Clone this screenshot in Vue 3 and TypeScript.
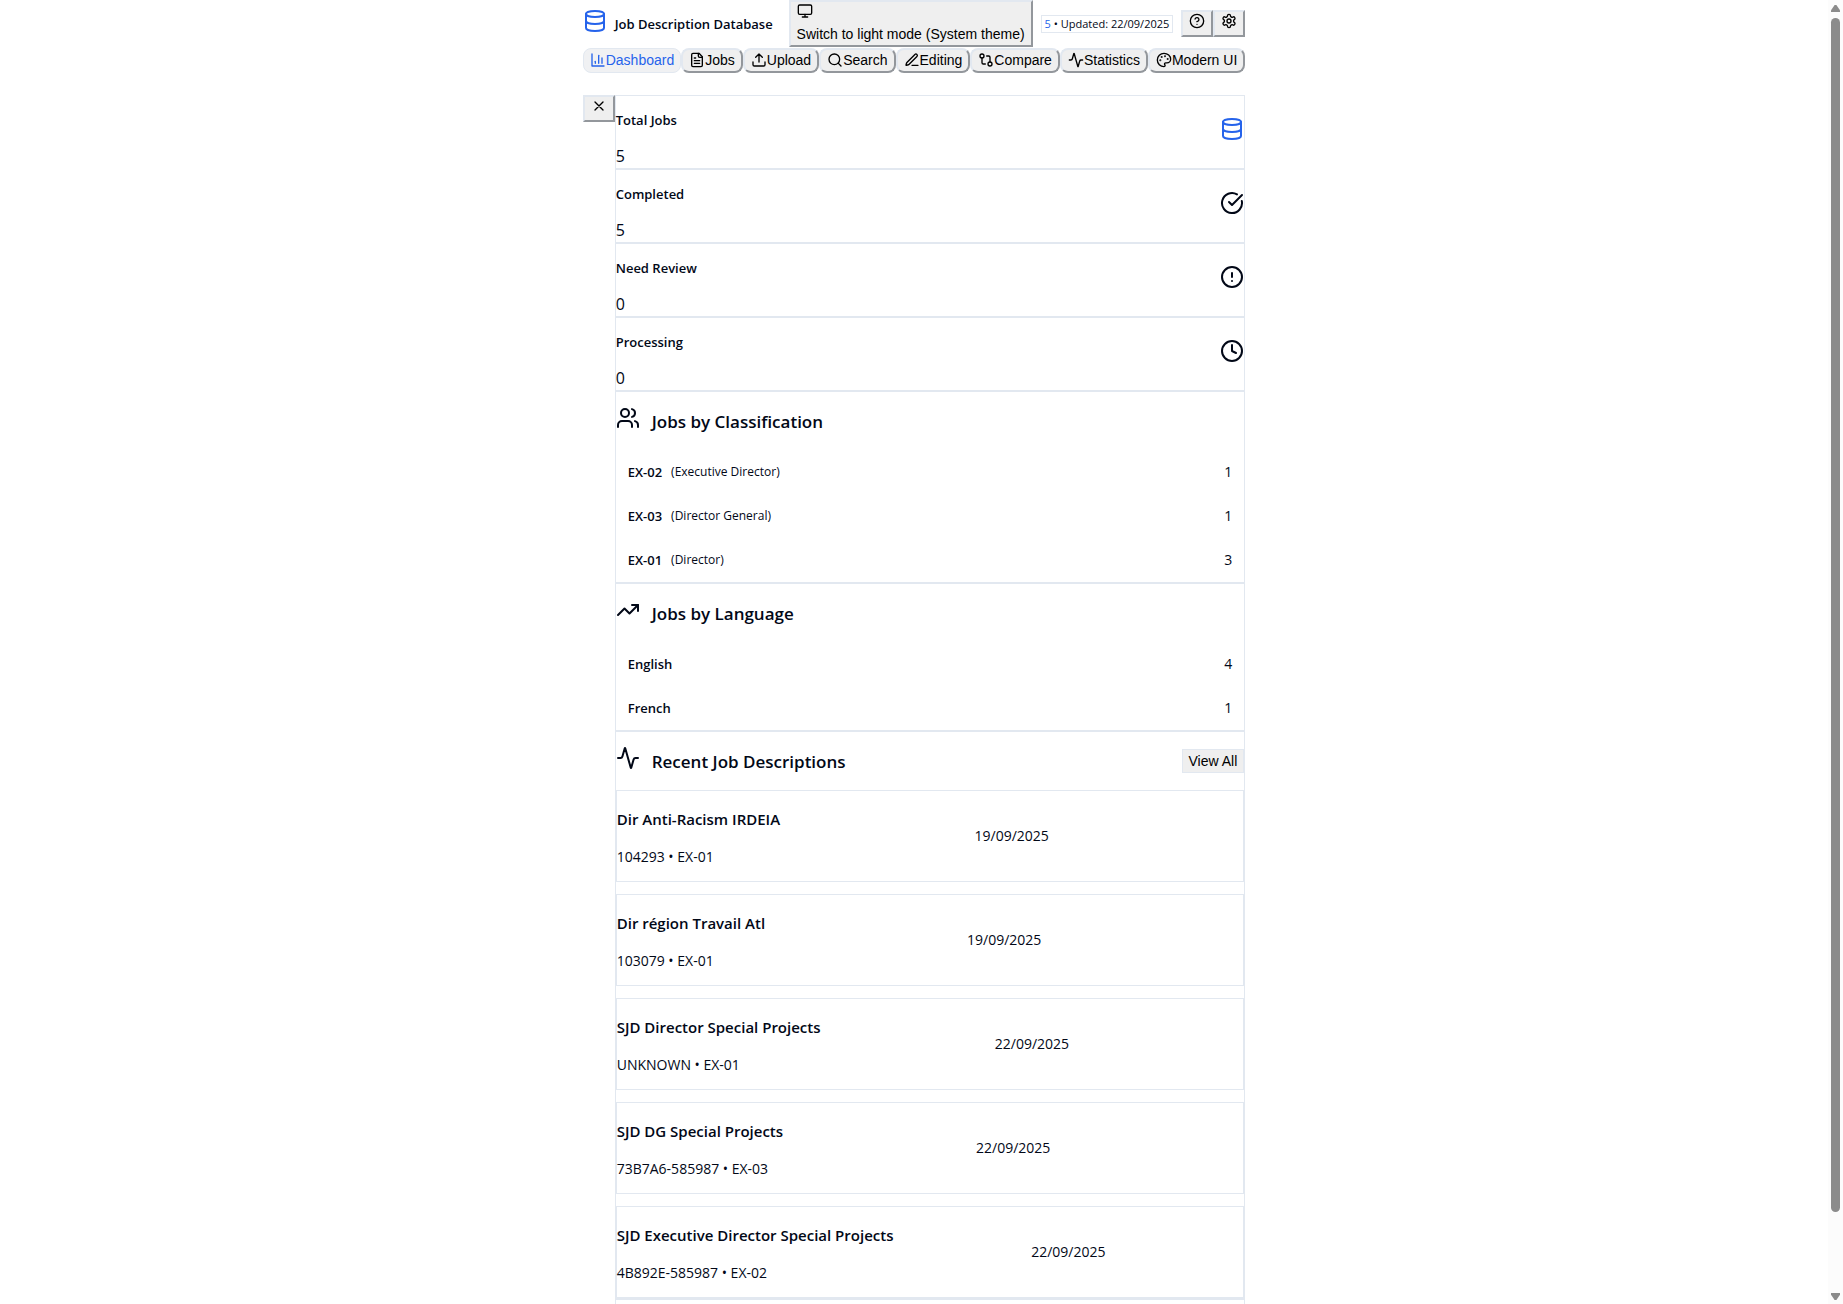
<script setup lang="ts">
import { h, type FunctionalComponent } from 'vue'

const paths: Record<string, string> = {
  database:
    '<ellipse cx="12" cy="5" rx="9" ry="3"/><path d="M3 5V19A9 3 0 0 0 21 19V5"/><path d="M3 12A9 3 0 0 0 21 12"/>',
  monitor: '<rect width="20" height="14" x="2" y="3" rx="2"/><path d="M8 21h8M12 17v4"/>',
  help: '<circle cx="12" cy="12" r="10"/><path d="M9.09 9a3 3 0 0 1 5.83 1c0 2-3 3-3 3"/><path d="M12 17h.01"/>',
  settings:
    '<path d="M12.22 2h-.44a2 2 0 0 0-2 2v.18a2 2 0 0 1-1 1.73l-.43.25a2 2 0 0 1-2 0l-.15-.08a2 2 0 0 0-2.73.73l-.22.38a2 2 0 0 0 .73 2.73l.15.1a2 2 0 0 1 1 1.72v.51a2 2 0 0 1-1 1.74l-.15.09a2 2 0 0 0-.73 2.73l.22.38a2 2 0 0 0 2.73.73l.15-.08a2 2 0 0 1 2 0l.43.25a2 2 0 0 1 1 1.73V20a2 2 0 0 0 2 2h.44a2 2 0 0 0 2-2v-.18a2 2 0 0 1 1-1.73l.43-.25a2 2 0 0 1 2 0l.15.08a2 2 0 0 0 2.73-.73l.22-.39a2 2 0 0 0-.73-2.73l-.15-.08a2 2 0 0 1-1-1.74v-.5a2 2 0 0 1 1-1.74l.15-.09a2 2 0 0 0 .73-2.73l-.22-.38a2 2 0 0 0-2.73-.73l-.15.08a2 2 0 0 1-2 0l-.43-.25a2 2 0 0 1-1-1.73V4a2 2 0 0 0-2-2z"/><circle cx="12" cy="12" r="3"/>',
  chart: '<path d="M3 3v18h18"/><path d="M18 17V9"/><path d="M13 17V5"/><path d="M8 17v-3"/>',
  file: '<path d="M15 2H6a2 2 0 0 0-2 2v16a2 2 0 0 0 2 2h12a2 2 0 0 0 2-2V7Z"/><path d="M14 2v4a2 2 0 0 0 2 2h4"/><path d="M10 9H8M16 13H8M16 17H8"/>',
  upload: '<path d="M21 15v4a2 2 0 0 1-2 2H5a2 2 0 0 1-2-2v-4"/><path d="m17 8-5-5-5 5M12 3v12"/>',
  search: '<circle cx="11" cy="11" r="8"/><path d="m21 21-4.3-4.3"/>',
  pen: '<path d="M12 20h9"/><path d="M16.376 3.622a1 1 0 0 1 3.002 3.002L7.368 18.635a2 2 0 0 1-.855.506l-2.872.838a.5.5 0 0 1-.62-.62l.838-2.872a2 2 0 0 1 .506-.854z"/>',
  compare:
    '<circle cx="18" cy="18" r="3"/><circle cx="6" cy="6" r="3"/><path d="M13 6h3a2 2 0 0 1 2 2v7"/><path d="M11 18H8a2 2 0 0 1-2-2V9"/>',
  activity:
    '<path d="M22 12h-2.48a2 2 0 0 0-1.93 1.46l-2.35 8.36a.25.25 0 0 1-.48 0L9.24 2.18a.25.25 0 0 0-.48 0l-2.35 8.36A2 2 0 0 1 4.49 12H2"/>',
  palette:
    '<circle cx="13.5" cy="6.5" r=".5" fill="currentColor"/><circle cx="17.5" cy="10.5" r=".5" fill="currentColor"/><circle cx="8.5" cy="7.5" r=".5" fill="currentColor"/><circle cx="6.5" cy="12.5" r=".5" fill="currentColor"/><path d="M12 2C6.5 2 2 6.5 2 12s4.5 10 10 10c.926 0 1.648-.746 1.648-1.688 0-.437-.18-.835-.437-1.125-.29-.289-.438-.652-.438-1.125a1.64 1.64 0 0 1 1.668-1.668h1.996c3.051 0 5.555-2.503 5.555-5.554C21.965 6.012 17.461 2 12 2z"/>',
  close: '<path d="M18 6 6 18M6 6l12 12"/>',
  check: '<path d="M21.801 10A10 10 0 1 1 17 3.335"/><path d="m9 11 3 3L22 4"/>',
  alert: '<circle cx="12" cy="12" r="10"/><path d="M12 8v4M12 16h.01"/>',
  clock: '<circle cx="12" cy="12" r="10"/><path d="M12 6v6l4 2"/>',
  users:
    '<path d="M16 21v-2a4 4 0 0 0-4-4H6a4 4 0 0 0-4 4v2"/><circle cx="9" cy="7" r="4"/><path d="M22 21v-2a4 4 0 0 0-3-3.87M16 3.13a4 4 0 0 1 0 7.75"/>',
  trending: '<path d="m22 7-8.5 8.5-5-5L2 17"/><path d="M16 7h6v6"/>',
}

const Icon: FunctionalComponent<{ name: string; size?: number }> = (props) =>
  h('svg', {
    width: props.size ?? 16,
    height: props.size ?? 16,
    viewBox: '0 0 24 24',
    fill: 'none',
    stroke: 'currentColor',
    'stroke-width': 2,
    'stroke-linecap': 'round',
    'stroke-linejoin': 'round',
    'aria-hidden': 'true',
    innerHTML: paths[props.name],
  })
Icon.props = ['name', 'size']

const tabs = [
  { label: 'Dashboard', icon: 'chart' },
  { label: 'Jobs', icon: 'file' },
  { label: 'Upload', icon: 'upload' },
  { label: 'Search', icon: 'search' },
  { label: 'Editing', icon: 'pen' },
  { label: 'Compare', icon: 'compare' },
  { label: 'Statistics', icon: 'activity' },
  { label: 'Modern UI', icon: 'palette' },
]

const stats = [
  { label: 'Total Jobs', value: 5, icon: 'database' },
  { label: 'Completed', value: 5, icon: 'check' },
  { label: 'Need Review', value: 0, icon: 'alert' },
  { label: 'Processing', value: 0, icon: 'clock' },
]

const breakdowns = [
  {
    title: 'Jobs by Classification',
    icon: 'users',
    rows: [
      { name: 'EX-02', note: '(Executive Director)', count: 1 },
      { name: 'EX-03', note: '(Director General)', count: 1 },
      { name: 'EX-01', note: '(Director)', count: 3 },
    ],
  },
  {
    title: 'Jobs by Language',
    icon: 'trending',
    rows: [
      { name: 'English', note: '', count: 4 },
      { name: 'French', note: '', count: 1 },
    ],
  },
]

const jobs = [
  { title: 'Dir Anti-Racism IRDEIA', meta: '104293 • EX-01', date: '19/09/2025' },
  { title: 'Dir région Travail Atl', meta: '103079 • EX-01', date: '19/09/2025' },
  { title: 'SJD Director Special Projects', meta: 'UNKNOWN • EX-01', date: '22/09/2025' },
  { title: 'SJD DG Special Projects', meta: '73B7A6-585987 • EX-03', date: '22/09/2025' },
  { title: 'SJD Executive Director Special Projects', meta: '4B892E-585987 • EX-02', date: '22/09/2025' },
]
</script>

<template>
  <div class="shell">
    <div class="viewport">
      <div class="page">
        <header>
          <div class="topbar">
            <Icon name="database" :size="24" class="accent" />
            <h1>Job Description Database</h1>
            <button type="button" class="theme">
              <Icon name="monitor" />
              <span>Switch to light mode (System theme)</span>
            </button>
            <div class="badge"><span class="accent">5</span> • Updated: 22/09/2025</div>
            <div class="tools">
              <button type="button" class="square" aria-label="Help"><Icon name="help" /></button>
              <button type="button" class="square" aria-label="Settings"><Icon name="settings" /></button>
            </div>
          </div>
          <nav>
            <button
              v-for="(tab, i) in tabs"
              :key="tab.label"
              type="button"
              :class="['tab', { active: i === 0 }]"
            >
              <Icon :name="tab.icon" />{{ tab.label }}
            </button>
          </nav>
        </header>

        <div class="body">
          <button type="button" class="square" aria-label="Close"><Icon name="close" /></button>
          <main>
            <section v-for="stat in stats" :key="stat.label" class="card stat">
              <div>
                <h2>{{ stat.label }}</h2>
                <p>{{ stat.value }}</p>
              </div>
              <Icon :name="stat.icon" :size="24" :class="{ accent: stat.icon === 'database' }" />
            </section>

            <section v-for="group in breakdowns" :key="group.title" class="card">
              <div class="heading">
                <Icon :name="group.icon" :size="24" />
                <h2>{{ group.title }}</h2>
              </div>
              <ul>
                <li v-for="row in group.rows" :key="row.name">
                  <strong>{{ row.name }}</strong>
                  <small v-if="row.note">{{ row.note }}</small>
                  <span class="count">{{ row.count }}</span>
                </li>
              </ul>
            </section>

            <section class="card">
              <div class="heading">
                <Icon name="activity" :size="24" />
                <h2>Recent Job Descriptions</h2>
                <button type="button" class="view-all">View All</button>
              </div>
              <div class="jobs">
                <article v-for="job in jobs" :key="job.title" class="job">
                  <div>
                    <h3>{{ job.title }}</h3>
                    <p>{{ job.meta }}</p>
                  </div>
                  <time>{{ job.date }}</time>
                  <div></div>
                </article>
              </div>
            </section>
            <section class="card more"></section>
          </main>
        </div>
      </div>
    </div>
    <div class="scrollbar" aria-hidden="true">
      <i class="arrow up"></i>
      <i class="thumb"></i>
      <i class="arrow down"></i>
    </div>
  </div>
</template>

<style>
body {
  margin: 0;
  background: #fff;
}
</style>

<style scoped>
.shell {
  display: flex;
  height: 100vh;
  overflow: hidden;
  color: #020817;
  font-family: 'Segoe UI', 'Open Sans', 'Noto Sans', sans-serif;
  font-size: 14px;
  line-height: 20px;
}
.viewport {
  flex: 1;
  min-width: 0;
  overflow-y: auto;
  scrollbar-width: none;
}
.page {
  width: fit-content;
  margin: 0 auto;
}
h1,
h2,
h3,
p,
ul {
  margin: 0;
  padding: 0;
}
h1,
h2,
h3,
strong {
  font-size: 13px;
  font-weight: 600;
}
svg {
  display: block;
  flex: none;
}
.accent {
  color: #2563eb;
}
button {
  padding: 1px 6px;
  border: 2px outset #e2e8f0;
  background: #efefef;
  color: #000;
  font: 14px / 19px 'Liberation Sans', Arial, sans-serif;
  white-space: nowrap;
}

.topbar {
  display: flex;
  align-items: center;
  padding-bottom: 1px;
}
h1 {
  flex: 1;
  margin-left: 8px;
  white-space: nowrap;
}
.topbar > svg {
  margin-bottom: 5px;
}
.theme {
  display: flex;
  flex-direction: column;
  gap: 6px;
}
.badge {
  margin: 0 8px;
  padding: 0 3px;
  border: 1px solid #e2e8f0;
  font-size: 11px;
  line-height: 16px;
}
.tools {
  display: flex;
}
.square {
  display: flex;
  align-items: flex-start;
  justify-content: center;
  width: 32px;
  height: 27px;
  flex: none;
}
nav {
  display: flex;
}
.tab {
  display: flex;
  align-items: center;
  border-radius: 8px;
}
.tab svg {
  margin-bottom: 1px;
}
.tab.active {
  border: 1px solid #e2e8f0;
  background: #f0f1f3;
  color: #2563eb;
}

.body {
  display: flex;
  align-items: flex-start;
  margin-top: 22px;
}
main {
  flex: 1;
}
.card {
  border: 1px solid #e2e8f0;
}
.stat {
  display: flex;
  justify-content: space-between;
  padding-top: 14px;
}
.stat p {
  margin-top: 15px;
  padding-bottom: 1px;
  font-size: 16px;
  line-height: 22px;
}
.stat svg {
  margin-top: 7px;
}
.heading {
  display: flex;
  align-items: center;
  height: 58px;
}
.heading svg {
  margin-bottom: 6px;
}
.heading h2 {
  flex: 1;
  margin-left: 12px;
  padding-top: 2px;
  font-size: 17px;
  line-height: 24px;
}
.view-all {
  border: 1px solid #e2e8f0;
  padding: 2px 6px 1px;
}
li {
  display: flex;
  align-items: center;
  padding: 12px;
}
small {
  margin-left: 9px;
  font-size: 12px;
}
.count {
  margin-left: auto;
}
.jobs {
  display: flex;
  flex-direction: column;
  gap: 12px;
}
.job {
  display: flex;
  align-items: center;
  justify-content: space-between;
  padding: 16px 0 14px;
  border: 1px solid #e2e8f0;
}
.job h3 {
  font-size: 15px;
  line-height: 24px;
}
.job p {
  margin-top: 16px;
}
.job time {
  padding-bottom: 3px;
}
.more {
  height: 72px;
}

.scrollbar {
  display: flex;
  flex-direction: column;
  align-items: center;
  width: 15px;
  padding: 5px 0 4px;
  box-sizing: border-box;
  background: #fcfcfc;
}
.arrow {
  width: 9px;
  height: 7px;
  background: #8b8b8b;
}
.up {
  clip-path: polygon(40% 0, 60% 0, 100% 75%, 100% 100%, 0 100%, 0 75%);
}
.down {
  margin-top: auto;
  clip-path: polygon(0 0, 100% 0, 100% 25%, 60% 100%, 40% 100%, 0 25%);
}
.thumb {
  width: 9px;
  height: calc(100% - 101px);
  margin-top: 6px;
  border-radius: 5px;
  background: #8b8b8b;
}
</style>
